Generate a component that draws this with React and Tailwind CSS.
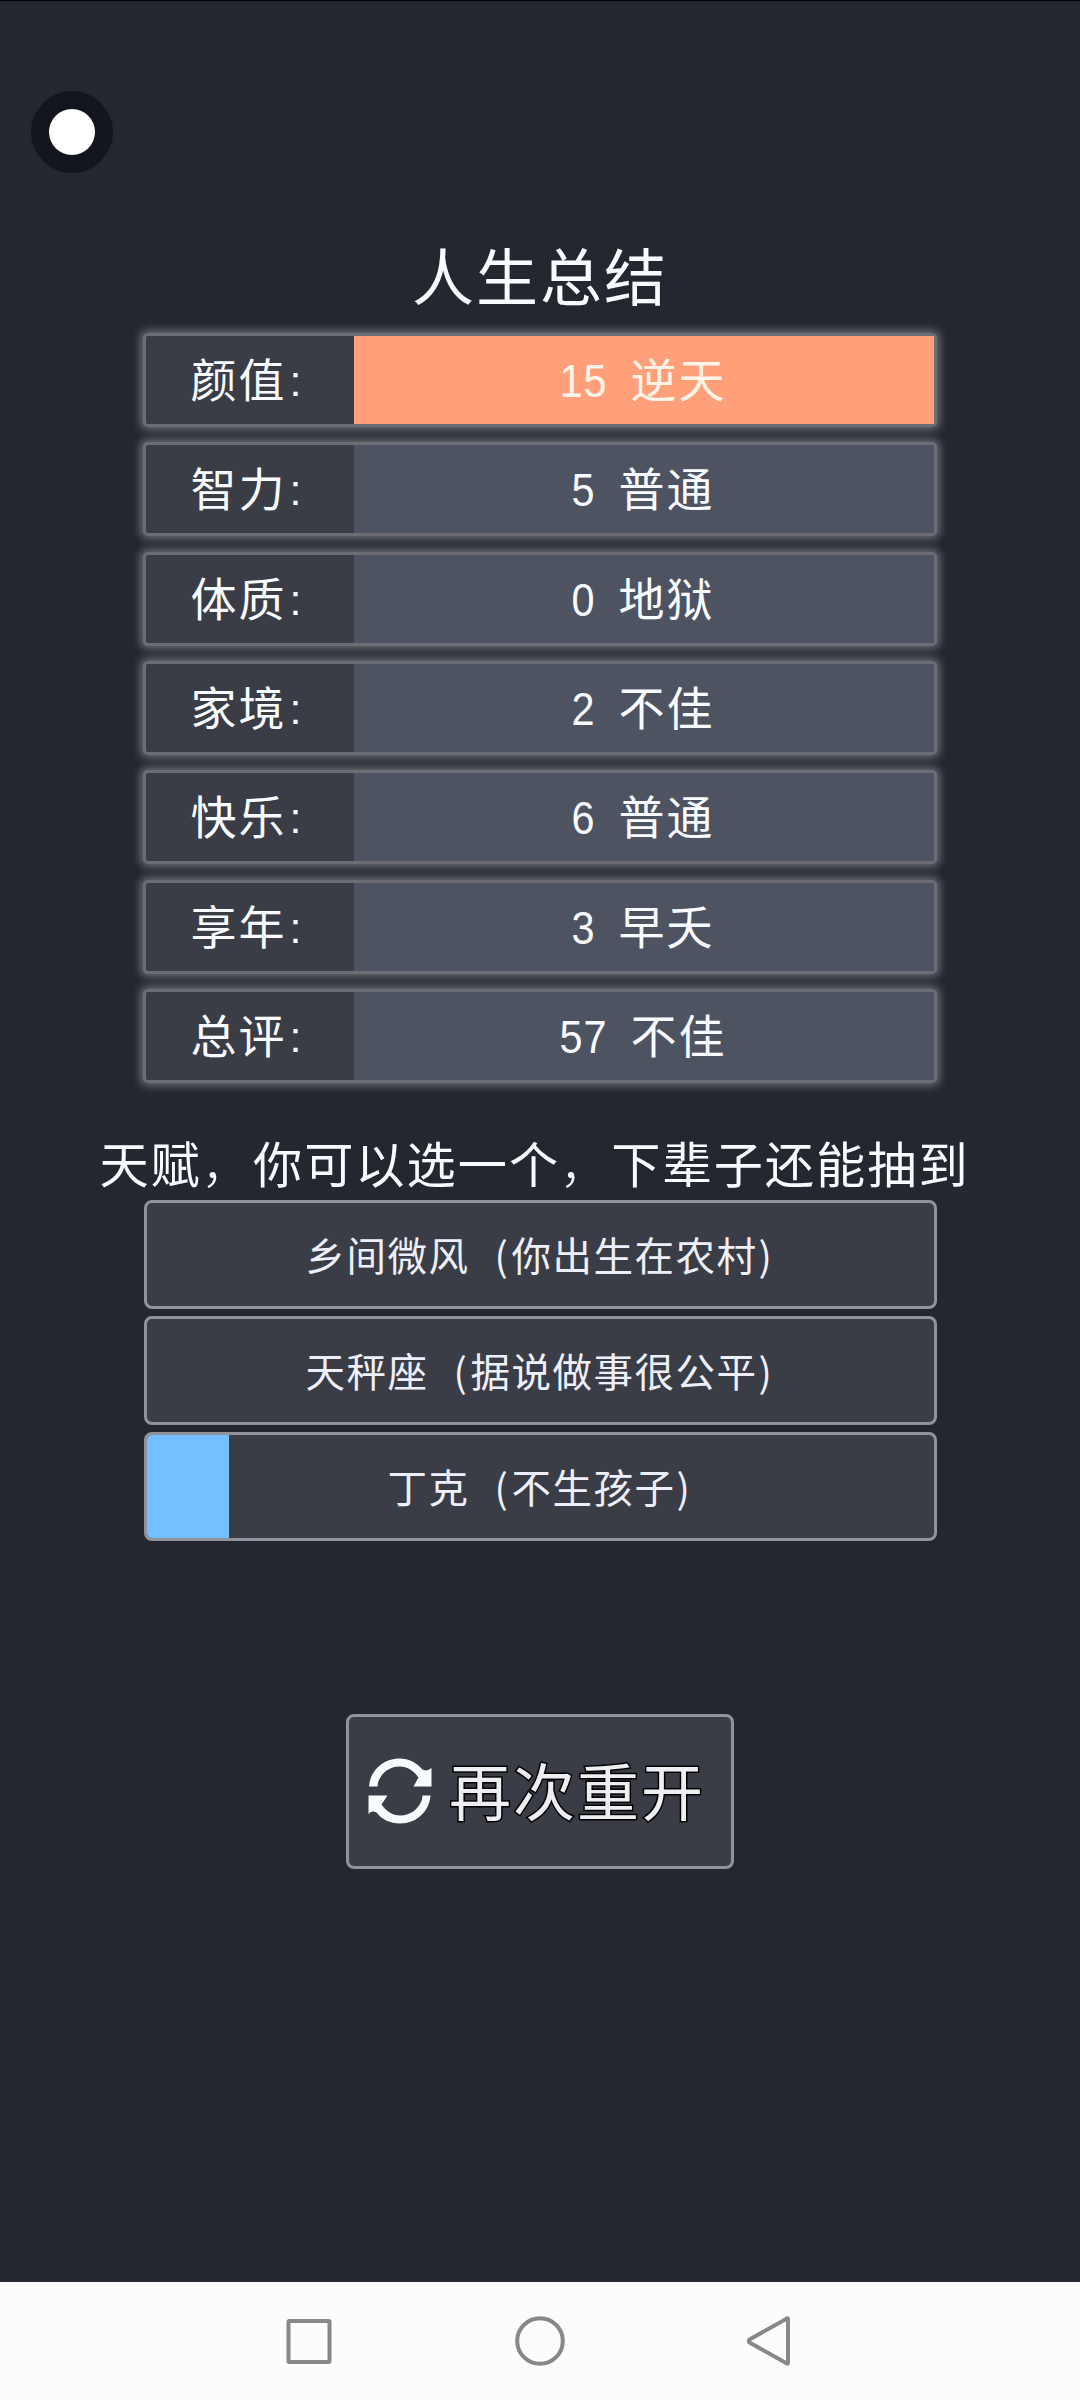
const stats = [
  { label: "颜值", value: "15", grade: "逆天", top: true },
  { label: "智力", value: "5", grade: "普通" },
  { label: "体质", value: "0", grade: "地狱" },
  { label: "家境", value: "2", grade: "不佳" },
  { label: "快乐", value: "6", grade: "普通" },
  { label: "享年", value: "3", grade: "早夭" },
  { label: "总评", value: "57", grade: "不佳" },
];

const talents = [
  { name: "乡间微风", note: "你出生在农村" },
  { name: "天秤座", note: "据说做事很公平" },
  { name: "丁克", note: "不生孩子", selected: true },
];

function StatRow({ label, value, grade, top }) {
  return (
    <div className="flex h-[94px] rounded-[5px] border-[3px] border-[#6c6d74] bg-[#3a3d45] text-[46px] leading-[82px] whitespace-nowrap text-[#f8fbff] shadow-[0_0_8px_3px_rgba(150,152,160,0.6)]">
      <div className="flex w-[208px] justify-center">
        <span className="pl-px tracking-[2px]">{label}</span>
        <span className="w-6 pl-[3px] font-['Liberation_Sans'] text-[43px] leading-[90px]">:</span>
      </div>
      <div className={top ? "flex flex-1 justify-center bg-[#ffa07a] pr-[3px] text-[#fff4e8]" : "flex flex-1 justify-center bg-[#4e5361] pr-[3px]"}>
        <span className="mr-6 flex font-['Liberation_Sans'] text-[46px] leading-[90px]">
          {value.split("").map((digit, i) => (
            <span key={i} className="flex w-6 scale-x-90 justify-center">{digit}</span>
          ))}
        </span>
        <span className="tracking-[2px]">{grade}</span>
      </div>
    </div>
  );
}

function Talent({ name, note, selected }) {
  return (
    <button className="flex h-[109px] w-full overflow-hidden rounded-[8px] border-[3px] border-[#90929c] bg-[#3a3c46] text-[39.5px] leading-[101px] text-[#edf0fa]">
      <span className={selected ? "-mr-[82px] h-full w-[82px] bg-[#74bfff]" : "hidden"} />
      <span className="flex flex-1 justify-center whitespace-nowrap">
        <span className="pl-[2px] tracking-[1.5px]">{name}</span>
        <span className="w-[41px] pl-[25px] text-left">(</span>
        <span className="pl-px tracking-[1.5px]">{note}</span>
        <span className="w-[19px] pl-px text-left">)</span>
      </span>
    </button>
  );
}

export default function App() {
  return (
    <div className="flex h-[2400px] w-[1080px] flex-col border-t border-black bg-[#242730] font-['Noto_Sans_CJK_SC',sans-serif] font-normal">
      <header className="h-[225px] pt-[90px] pl-[31px]">
        <div className="flex size-[82px] items-center justify-center rounded-full bg-[#13161d]">
          <div className="size-[46px] rounded-full bg-white" />
        </div>
      </header>
      <main className="flex flex-1 flex-col items-center">
        <h1 className="h-[107px] text-[62px] leading-[96px] tracking-[2px] text-[#f8fbff]">人生总结</h1>
        <section className="flex w-[794px] flex-col gap-[15.33px]">
          {stats.map((s) => (
            <StatRow key={s.label} {...s} />
          ))}
        </section>
        <h2 className="mt-[51px] -ml-[11px] h-[66px] text-[49.2px] leading-[56px] tracking-[2px] whitespace-nowrap text-[#f8fbff]">
          天赋<span className="font-light">，</span>你可以选一个<span className="font-light">，</span>下辈子还能抽到
        </h2>
        <section className="flex w-[793px] flex-col gap-[7px]">
          {talents.map((t) => (
            <Talent key={t.name} {...t} />
          ))}
        </section>
        <button className="mt-[173px] flex h-[155px] w-[388px] items-center rounded-[8px] border-[3px] border-[#90929c] bg-[#3a3c46] pl-[19px]">
          <svg width="64" height="66" viewBox="0 0 64 66" fill="#f8fbfb">
            <path d="M1 28.5C2 13 15 .5 31.500 .5C41 .5 49 5 54.500 11.500Q59 14 63.500 10V28.500H45.500L50.500 19.500C46 13 39.500 8.500 31.500 8.500C21 8.500 13 15.500 10 24.500L9.500 28.500Z" />
            <path d="M62.500 37.500C61.500 53 49 65.500 32 65.500C22 65.500 14 61.500 8.500 54.500Q4 52 .5 56V37.500H19.500L13.500 46.500C18 53 24.500 57.500 32 57.500C43 57.500 51 50.500 54 41.500L54.500 37.500Z" />
          </svg>
          <span className="ml-[17px] -mt-[4px] text-[62px] leading-[100px] tracking-[2px] text-[#eeeef2] [-webkit-text-stroke:3px_#000] [paint-order:stroke_fill]">
            再次重开
          </span>
        </button>
      </main>
      <nav className="flex h-[118px] items-center bg-[#fdfbfe] pl-[286px]">
        <svg width="506" height="54" viewBox="0 0 506 54" fill="none" stroke="#888789" strokeWidth="4" strokeLinejoin="round">
          <rect x="2.500" y="7" width="41" height="41" rx="1" />
          <circle cx="254" cy="27" r="22.800" />
          <path d="M502 5V49Q502 50 501 49.500L463.500 28.500Q462 27 463.500 25.500L501 4.500Q502 4 502 5Z" />
        </svg>
      </nav>
    </div>
  );
}
